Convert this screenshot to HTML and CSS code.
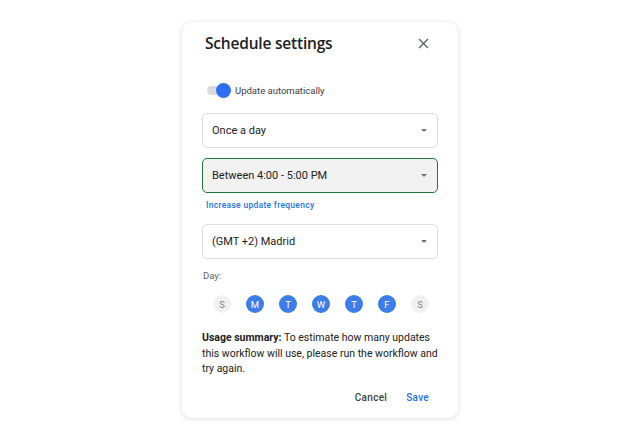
FILE: index.html
```html
<html>

<head>
  <meta name="viewport" content="width=device-width, initial-scale=1" />
  <link rel="stylesheet" href="styles.css">
  <title>Schedule settings</title>
</head>

<body>
  <div class="dialog">
    <div class="dialog-header">
      <h1>Schedule settings</h1>
      <button class="close" aria-label="Close">
        <svg width="11" height="11" viewBox="0 0 11 11">
          <path d="M1 1L10 10M10 1L1 10" stroke="#5f6368" stroke-width="1.4" />
        </svg>
      </button>
    </div>

    <label class="toggle-row">
      <span class="toggle"><span class="knob"></span></span>
      Update automatically
    </label>

    <div class="select">
      <span>Once a day</span>
      <span class="caret"></span>
    </div>

    <div class="select focused">
      <span>Between 4:00 - 5:00 PM</span>
      <span class="caret"></span>
    </div>

    <a class="link" href="#">Increase update frequency</a>

    <div class="select">
      <span>(GMT +2) Madrid</span>
      <span class="caret"></span>
    </div>

    <div class="day-label">Day:</div>
    <div class="days">
      <span class="day">S</span>
      <span class="day on">M</span>
      <span class="day on">T</span>
      <span class="day on">W</span>
      <span class="day on">T</span>
      <span class="day on">F</span>
      <span class="day">S</span>
    </div>

    <p class="summary">
      <b>Usage summary:</b> To estimate how many updates this workflow will use, please run the workflow and try again.
    </p>

    <div class="actions">
      <button class="btn">Cancel</button>
      <button class="btn primary">Save</button>
    </div>
  </div>
</body>

</html>
```

FILE: styles.css
```css
body {
  margin: 0;
  background: #fff;
  font-family: Roboto, "Liberation Sans", sans-serif;
  color: #202124;
}

.dialog {
  width: 276px;
  height: 396px;
  box-sizing: border-box;
  margin: 22px auto 0;
  padding: 9px 20px 0;
  border-radius: 10px;
  background: #fff;
  box-shadow: 0 1px 6px rgba(0, 0, 0, 0.12), 0 0 2px rgba(0, 0, 0, 0.06);
}

.dialog-header {
  display: flex;
  align-items: center;
  justify-content: space-between;
  height: 24px;
  padding-left: 3px;
}

.dialog-header h1 {
  margin: 0;
  font-family: "Open Sans", sans-serif;
  font-size: 15.5px;
  font-weight: 600;
  letter-spacing: -0.2px;
}

.close {
  border: 0;
  background: none;
  padding: 0;
  margin-right: 9px;
  display: flex;
}

.toggle-row {
  display: flex;
  align-items: center;
  gap: 6px;
  margin: 27px 0 0 5px;
  height: 16px;
  font-size: 9.5px;
  color: #3c4043;
}

.toggle {
  position: relative;
  width: 22px;
  height: 9px;
  border-radius: 5px;
  background: #d9dadc;
}

.knob {
  position: absolute;
  right: -2px;
  top: -3px;
  width: 15px;
  height: 15px;
  border-radius: 50%;
  background: #2f6ef0;
}

.select {
  display: flex;
  align-items: center;
  justify-content: space-between;
  height: 35px;
  box-sizing: border-box;
  margin-top: 15px;
  padding: 0 10px 0 9px;
  border: 1px solid #dadce0;
  border-radius: 5px;
  font-size: 11px;
}

.select.focused {
  margin-top: 10px;
  border-color: #1e7a3c;
  border-width: 1.5px;
  background: #f1f1f1;
}

.caret {
  width: 0;
  height: 0;
  border-left: 3px solid transparent;
  border-right: 3px solid transparent;
  border-top: 3px solid #6f7377;
}

.link {
  display: block;
  margin: 7px 0 0 4px;
  font-size: 8.5px;
  font-weight: 500;
  color: #1a73e8;
  text-decoration: none;
  letter-spacing: 0.3px;
}

.link + .select {
  margin-top: 14px;
}

.day-label {
  margin: 11px 0 0 1px;
  font-size: 9.5px;
  color: #5f6368;
}

.days {
  display: flex;
  gap: 15px;
  margin: 14px 0 0 11px;
}

.day {
  display: flex;
  align-items: center;
  justify-content: center;
  width: 18px;
  height: 18px;
  border-radius: 50%;
  background: #f1f1f1;
  color: #80868b;
  font-size: 9.5px;
}

.day.on {
  background: #3c7de9;
  color: #fff;
}

.summary {
  margin: 17px 0 0;
  font-size: 10.5px;
  line-height: 15.5px;
  color: #202124;
}

.summary b {
  font-weight: 700;
}

.actions {
  display: flex;
  justify-content: flex-end;
  gap: 19px;
  margin: 15px 9px 0 0;
}

.btn {
  border: 0;
  background: none;
  padding: 0;
  font-family: Roboto, sans-serif;
  font-size: 10px;
  font-weight: 500;
  color: #3c4043;
  letter-spacing: 0.3px;
}

.btn.primary {
  color: #1a73e8;
}
```
